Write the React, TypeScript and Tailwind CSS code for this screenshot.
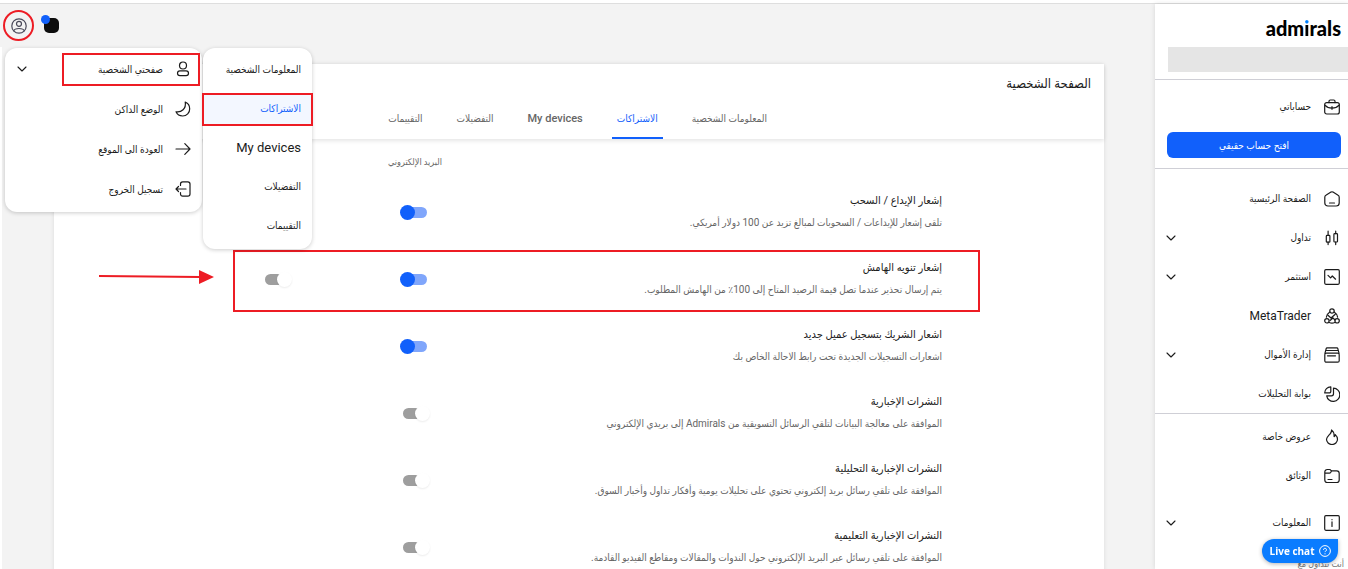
import React, { useState } from 'react';
import clsx from 'clsx';

type IconProps = { className?: string; children: React.ReactNode };

// Base for every line icon, 16x16 grid
function Icon({ className, children }: IconProps) {
  return (
    <svg
      className={clsx('size-4 shrink-0', className)}
      viewBox="0 0 16 16"
      fill="none"
      stroke="currentColor"
      strokeWidth={1.2}
      strokeLinecap="round"
      strokeLinejoin="round"
      aria-hidden="true"
    >
      {children}
    </svg>
  );
}

const icons = {
  briefcase: (
    <>
      <rect x="0.7" y="3.6" width="14.6" height="11.4" rx="2" />
      <path d="M5 3.6V2.3A1.3 1.3 0 0 1 6.3 1h3.4A1.3 1.3 0 0 1 11 2.3v1.3M.9 6.2C3 8.6 5.4 9.2 8 9.2s5-.6 7.1-3M8 7.5v2.8" />
    </>
  ),
  home: <path d="M.8 6.2c0-.8.4-1.5 1.1-1.9L7 1.1a2 2 0 0 1 2 0l5.1 3.2c.7.4 1.1 1.100 1.1 1.900V12a3 3 0 0 1-3 3H3.800a3 3 0 0 1-3-3zM5.500 12h5" />,
  candles: (
    <>
      <rect x="2.3" y="5.4" width="3.6" height="6.8" rx=".8" />
      <rect x="9.9" y="3.6" width="3.6" height="8.4" rx=".8" />
      <path d="M4.1 1.2v4.2M4.1 12.2v2.4M11.7 1.2v2.4M11.7 12v2.6" />
    </>
  ),
  invest: (
    <>
      <rect x=".7" y=".7" width="14.6" height="14.6" rx="1.2" />
      <path d="M4 6.3l2.6 2.600 1.700-1.900 3.300 3.200" />
    </>
  ),
  meta: (
    <>
      <circle cx="8" cy="3" r="2.2" />
      <circle cx="2.9" cy="12.8" r="2.2" />
      <circle cx="13.1" cy="12.8" r="2.2" />
      <path d="M5.800 4C4 5.200 2.700 7 2.400 9.200M10.200 4c1.800 1.200 3.100 3 3.400 5.200M5.300 14.500c1.700.8 3.700.8 5.400 0M4.200 7.500L7 10l4-3.500M6 12.500L9 10l2 2" />
    </>
  ),
  funds: (
    <>
      <rect x=".8" y="6.2" width="14.4" height="9" rx="1.5" />
      <path d="M1 6.2l1.2-4.500a1 1 0 0 1 1-.9h9.600a1 1 0 0 1 1 .9L15 6.200M2 3.500h12M3.500 8.800h8" />
    </>
  ),
  pie: (
    <>
      <path d="M6.800.8A6 6 0 0 0 .7 6.900h4.600a1.500 1.500 0 0 0 1.500-1.500z" />
      <path d="M9.500 2.200a6.600 6.600 0 1 1-6.800 7.600h4.800a2 2 0 0 0 2-2z" />
    </>
  ),
  fire: <path d="M7.500 1c.4 2.300-.8 3.300-2.100 4.700C4 7.200 2.500 8.400 2.500 10.300a5.500 5.200 0 0 0 11 0c0-2-1-3.600-2.200-4.700-.1 1-.5 1.700-1.200 2C10.300 4.800 9.400 2.300 7.500 1z" />,
  folder: <path d="M.8 4a2.500 2.500 0 0 1 2.500-2.500h2.200c.8 0 1.100.3 1.500 1l.4.400h5.300A2.500 2.500 0 0 1 15.200 5.400V12a2.500 2.500 0 0 1-2.500 2.500H3.300A2.500 2.500 0 0 1 .8 12zM1 5.200h4.500c1 0 1.300-.6 2-2.200M4 11.500h4" />,
  info: (
    <>
      <rect x=".7" y=".7" width="14.6" height="14.6" rx="1.2" />
      <path d="M8 6.800v4.700M8 4.500v.2" />
    </>
  ),
  person: (
    <>
      <circle cx="8" cy="4.5" r="3.5" />
      <rect x="2.5" y="9.8" width="11" height="4.8" rx="2.4" />
    </>
  ),
  moon: <path d="M10.200 1c2 .8 4.500 3.200 4.500 6.800a7 7 0 0 1-7 7.200C4.500 15 2 13 1 10.800c5.300 1 10.500-3.300 9.200-9.800z" />,
  arrow: <path d="M1 8h14M9.800 2.700L15 8l-5.200 5.300" />,
  logout: <path d="M5.500 4.500V3A2.200 2.200 0 0 1 7.700.8h5.100A2.200 2.200 0 0 1 15 3v10a2.200 2.200 0 0 1-2.200 2.200H7.700A2.200 2.200 0 0 1 5.500 13v-1.500M11 8H1M3.500 5.500L1 8l2.500 2.500" />,
  userCircle: (
    <>
      <circle cx="8" cy="8" r="7.2" />
      <circle cx="8" cy="5.8" r="2.5" />
      <path d="M2.800 12.800c.6-2 2.800-2.300 5.200-2.300s4.600.3 5.200 2.300" />
    </>
  ),
  chevron: <path strokeWidth="1.1" d="M4 6l4 4 4-4" />,
};

type IconName = keyof typeof icons;
type NavItem = { label: string; icon: IconName; expandable?: boolean; latin?: boolean };

const mainNav: NavItem[] = [
  { label: 'الصفحة الرئيسية', icon: 'home' },
  { label: 'تداول', icon: 'candles', expandable: true },
  { label: 'استثمر', icon: 'invest', expandable: true },
  { label: 'MetaTrader', icon: 'meta', latin: true },
  { label: 'إدارة الأموال', icon: 'funds', expandable: true },
  { label: 'بوابة التحليلات', icon: 'pie' },
];

const extraNav: NavItem[] = [
  { label: 'عروض خاصة', icon: 'fire' },
  { label: 'الوثائق', icon: 'folder' },
];

const profileMenu: NavItem[] = [
  { label: 'صفحتي الشخصية', icon: 'person', expandable: true },
  { label: 'الوضع الداكن', icon: 'moon' },
  { label: 'العودة الى الموقع', icon: 'arrow' },
  { label: 'تسجيل الخروج', icon: 'logout' },
];

const sections = ['المعلومات الشخصية', 'الاشتراكات', 'My devices', 'التفضيلات', 'التقييمات'];

const subscriptions = [
  {
    title: 'إشعار الإيداع / السحب',
    desc: 'تلقى إشعار للإيداعات / السحوبات لمبالغ تزيد عن 100 دولار أمريكي.',
    email: true,
  },
  {
    title: 'إشعار تنويه الهامش',
    desc: 'يتم إرسال تحذير عندما تصل قيمة الرصيد المتاح إلى 100٪ من الهامش المطلوب.',
    email: true,
    phone: false,
    marked: true,
  },
  {
    title: 'اشعار الشريك بتسجيل عميل جديد',
    desc: 'اشعارات التسجيلات الجديدة تحت رابط الاحالة الخاص بك',
    email: true,
  },
  {
    title: 'النشرات الإخبارية',
    desc: 'الموافقة على معالجة البيانات لتلقي الرسائل التسويقية من Admirals إلى بريدي الإلكتروني',
    email: false,
  },
  {
    title: 'النشرات الإخبارية التحليلية',
    desc: 'الموافقة على تلقي رسائل بريد إلكتروني تحتوي على تحليلات يومية وأفكار تداول وأخبار السوق.',
    email: false,
  },
  {
    title: 'النشرات الإخبارية التعليمية',
    desc: 'الموافقة على تلقي رسائل عبر البريد الإلكتروني حول الندوات والمقالات ومقاطع الفيديو القادمة.',
    email: false,
  },
];

// The thumb sticks out 3px past the track on both sides
function Switch({ initial, labelledBy }: { initial: boolean; labelledBy: string }) {
  const [on, setOn] = useState(initial);
  return (
    <input
      type="checkbox"
      role="switch"
      checked={on}
      onChange={() => setOn(!on)}
      aria-labelledby={labelledBy}
      className="relative block h-[11px] w-6 appearance-none rounded-full bg-[#9e9e9e] before:absolute before:-top-0.5 before:-right-[3px] before:size-[15px] before:rounded-full before:bg-white before:shadow-[0_1px_2px_rgba(0,0,0,0.08)] checked:bg-[#80a6fb] checked:before:right-3 checked:before:bg-[#1160fb] checked:before:shadow-none"
    />
  );
}

function SidebarItem({ item }: { item: NavItem }) {
  return (
    <a href="#" className="flex h-[39px] items-center pr-2 pl-3">
      <Icon>{icons[item.icon]}</Icon>
      <span className={clsx('mr-[13px] flex-1', item.latin ? 'text-[12px]' : 'text-[10px]')}>{item.label}</span>
      {item.expandable && <Icon className="-ml-1">{icons.chevron}</Icon>}
    </a>
  );
}

function Sidebar() {
  return (
    <aside className="w-[193px] shrink-0 overflow-hidden bg-white shadow-[0_0_5px_rgba(0,0,0,0.12)]">
      <a href="#" dir="ltr" className="flex h-[43px] items-center justify-end pt-1 pr-[7px] font-['Lato'] text-[20px] font-black text-black">
        adm
        <span className="bg-linear-to-b from-[#0080ff] from-40% to-black to-40% bg-clip-text text-transparent">i</span>
        rals
      </a>
      <div className="ml-[13px] h-[25px] bg-[#e5e5e5]" />
      <div className="mt-[7px] border-y border-[#cfcfd6] pt-[7px] pb-[10px]">
        <SidebarItem item={{ label: 'حساباتي', icon: 'briefcase' }} />
        <div className="pt-[6px] pr-[7px] pl-3">
          <button className="block h-[26px] w-full rounded-md bg-[#1160fb] text-[10px] text-white">افتح حساب حقيقي</button>
        </div>
      </div>
      <nav className="pt-[10px]">
        {mainNav.map((item) => (
          <SidebarItem key={item.label} item={item} />
        ))}
      </nav>
      <nav className="border-t border-[#cfcfd6] pt-[3px]">
        {extraNav.map((item) => (
          <SidebarItem key={item.label} item={item} />
        ))}
      </nav>
      <div className="pt-2">
        <SidebarItem item={{ label: 'المعلومات', icon: 'info', expandable: true }} />
      </div>
      <p className="mt-4 pr-1 text-[9px] text-[#777]">أنت تتداول مع</p>
    </aside>
  );
}

function ProfileMenu() {
  return (
    <div dir="ltr" className="absolute top-[44px] left-[5px] z-10 flex items-start gap-px">
      <ul dir="rtl" className="w-[197px] rounded-xl bg-white pt-px pb-[3px] shadow-[0_1px_4px_rgba(0,0,0,0.2)]">
        {profileMenu.map((item, i) => (
          <li key={item.label} className="relative">
            <button className="flex h-10 w-full items-center pr-[11px] pl-[13px] text-right text-[10px]">
              <Icon>{icons[item.icon]}</Icon>
              <span className="mr-3 flex-1">{item.label}</span>
              {item.expandable && <Icon className="-ml-1">{icons.chevron}</Icon>}
            </button>
            {i === 0 && <span className="pointer-events-none absolute top-1 right-[2px] bottom-[3px] left-[57px] border-2 border-[#ed1c24]" />}
          </li>
        ))}
      </ul>
      <ul dir="rtl" className="w-[109px] rounded-xl bg-white pt-[2px] pb-1 shadow-[0_1px_4px_rgba(0,0,0,0.2)]">
        {sections.map((label, i) => (
          <li key={label} className="relative">
            <button
              className={clsx(
                'h-[39px] w-full pr-[11px] text-right whitespace-nowrap',
                i === 1 && 'text-[#1160fb]',
                i === 2 ? 'text-[13px]' : 'text-[10px]'
              )}
            >
              {label}
            </button>
            {i === 1 && <span className="pointer-events-none absolute inset-x-[-1px] top-1 bottom-[2px] border-2 border-[#ed1c24] bg-[#1160fb]/5" />}
          </li>
        ))}
      </ul>
    </div>
  );
}

export default function App() {
  return (
    <div dir="rtl" className="flex h-screen flex-col overflow-hidden bg-[#f3f3f3] font-['Roboto','DejaVu_Sans_Condensed','DejaVu_Sans',sans-serif] text-[#1b1b1b]">
      <div className="h-1 shrink-0 border-b border-[#dedede] bg-white" />
      <div className="flex min-h-0 flex-1">
        <Sidebar />

        <main className="relative min-w-0 flex-1">
          {/* Top bar: profile and theme */}
          <header dir="ltr" className="flex h-[43px] items-center gap-[10px] pl-[3px]">
            <button aria-label="الصفحة الشخصية" className="flex size-[31px] items-center justify-center rounded-full border-2 border-[#ed1c24] text-[#4a4a5a]">
              <Icon>{icons.userCircle}</Icon>
            </button>
            <button aria-label="الوضع الداكن" className="relative size-[15px] rounded-[5px] bg-[#0d0d0d]">
              <span className="absolute -top-[3px] -left-[3px] size-[9px] rounded-full bg-[#1160fb]" />
            </button>
          </header>

          <ProfileMenu />

          <div className="min-h-full border-l-2 border-white pt-[17px] pr-[51px] pl-[52px]">
            <section className="bg-white shadow-[0_0_4px_rgba(0,0,0,0.1)]">
              <div className="h-[75px] shadow-[0_2px_4px_rgba(0,0,0,0.1)]">
                <h1 className="pt-2 pr-[13px] text-[13px] leading-6">الصفحة الشخصية</h1>
                <div className="flex gap-6 pt-[3px] pr-[332px] text-[#666]">
                  {sections.map((label, i) => (
                    <a
                      key={label}
                      href="#"
                      className={clsx(
                        'h-10 border-b-2 px-[5px] leading-10 whitespace-nowrap',
                        i === 1 ? 'border-[#1160fb] text-[#1160fb]' : 'border-transparent',
                        i === 2 ? 'text-[11px] font-medium' : 'text-[10px]'
                      )}
                    >
                      {label}
                    </a>
                  ))}
                </div>
              </div>

              <div className="grid h-11 grid-cols-[1fr_138px_138px] items-center pt-1 pr-[162px] pl-[154px] text-[9px] text-[#666]">
                <span id="col-email" className="col-start-2 text-center">البريد الإلكتروني</span>
              </div>

              {subscriptions.map((row, i) => (
                <div key={row.title} className="relative grid h-[67px] grid-cols-[1fr_138px_138px] pr-[162px] pl-[154px]">
                  <div className="pt-2 whitespace-nowrap">
                    <h2 id={`sub-${i}`} className="text-[11px] leading-5">{row.title}</h2>
                    <p className="mt-[2px] text-[10px] leading-5 text-[#666]">{row.desc}</p>
                  </div>
                  <div className="flex justify-center pt-6">
                    <Switch initial={row.email} labelledBy={`sub-${i} col-email`} />
                  </div>
                  {row.phone !== undefined && (
                    <div className="flex justify-center pt-6">
                      <Switch initial={row.phone} labelledBy={`sub-${i}`} />
                    </div>
                  )}
                  {row.marked && (
                    <>
                      <span className="pointer-events-none absolute top-0 right-[124px] left-[179px] h-[62px] border-2 border-[#ed1c24]" />
                      <svg className="absolute top-[19px] left-[45px] h-4 w-[116px]" viewBox="0 0 116 16" aria-hidden="true">
                        <path d="M0 7l101 1" stroke="#ed1c24" strokeWidth={2} />
                        <path d="M100 1l15 7-15 7z" fill="#ed1c24" />
                      </svg>
                    </>
                  )}
                </div>
              ))}
            </section>
          </div>
        </main>
      </div>

      <button dir="ltr" className="fixed right-[10px] bottom-[6px] z-20 flex h-6 w-[76px] items-center justify-center gap-1 rounded-l-xl rounded-br-xl bg-[#0a7cff] font-['Open_Sans'] text-[10px] font-bold whitespace-nowrap text-white shadow-[0_1px_4px_rgba(0,0,0,0.3)]">
        Live chat
        <svg className="size-3 shrink-0" viewBox="0 0 12 12" fill="none" stroke="currentColor" aria-hidden="true">
          <circle cx="6" cy="6" r="5.4" />
          <path d="M4.5 4.800a1.500 1.500 0 1 1 2.200 1.300c-.5.300-.7.500-.7 1M6 8.300v1" />
        </svg>
      </button>
    </div>
  );
}
